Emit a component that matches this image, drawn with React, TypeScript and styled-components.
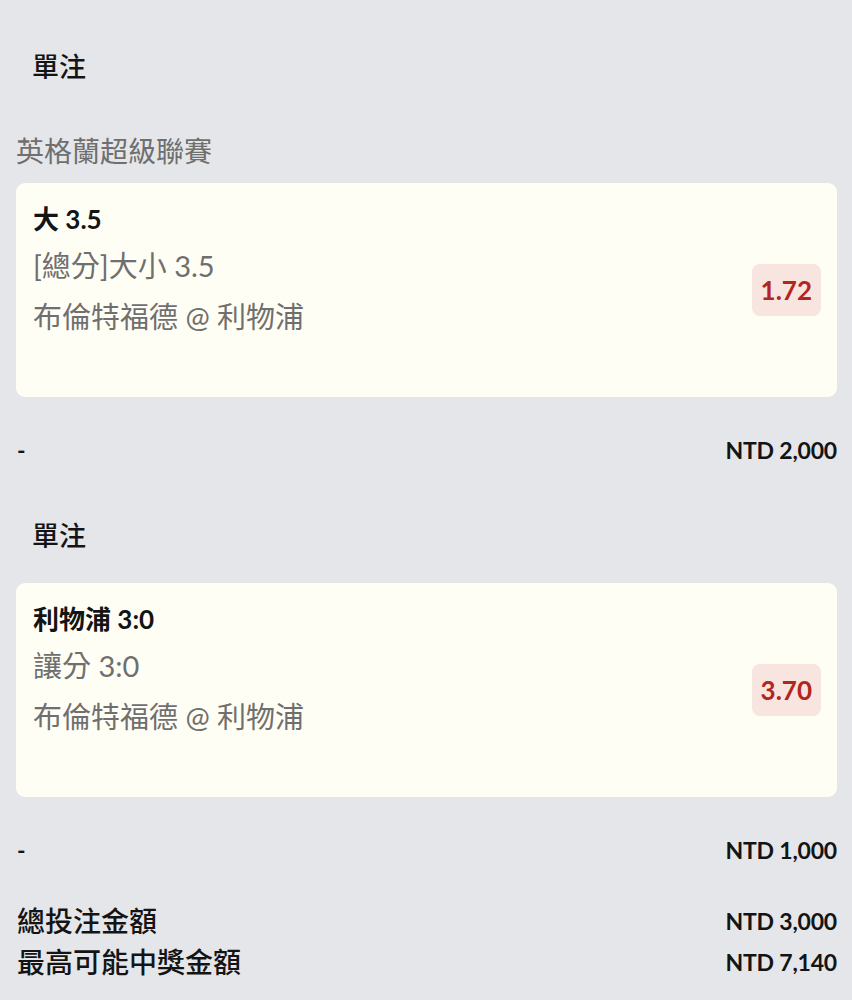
import styled, { createGlobalStyle } from 'styled-components';

const GlobalStyle = createGlobalStyle`
  html, body {
    margin: 0;
    padding: 0;
    background: #e5e6e9;
  }
  body {
    font-family: Lato, "Noto Sans CJK TC", "Noto Sans", sans-serif;
    color: #141414;
  }
`;

const Page = styled.div`
  padding: 47px 15px 30px 16px;
  display: flex;
  flex-direction: column;
`;

const SectionTitle = styled.div<{ $top?: number }>`
  margin-top: ${(p) => p.$top ?? 0}px;
  padding: 0 16px;
  font-size: 27px;
  font-weight: 500;
  line-height: 40px;
`;

const League = styled.div`
  margin-top: 44px;
  font-size: 28px;
  line-height: 40px;
  color: #6f6f6f;
`;

const Card = styled.div<{ $top: number }>`
  margin-top: ${(p) => p.$top}px;
  height: 214px;
  box-sizing: border-box;
  padding: 18px 16px 0 17px;
  background: #fffef5;
  border-radius: 9px;
  display: flex;
  justify-content: space-between;
  align-items: flex-start;
`;

const Info = styled.div`
  display: flex;
  flex-direction: column;
`;

const Pick = styled.div`
  font-size: 26px;
  font-weight: 700;
  line-height: 36px;
`;

const Detail = styled.div<{ $top: number }>`
  margin-top: ${(p) => p.$top}px;
  font-size: 29px;
  line-height: 40px;
  color: #6f6f6f;
`;

const Odds = styled.div`
  align-self: center;
  margin-top: -18px;
  height: 52px;
  padding: 0 9px;
  display: flex;
  align-items: center;
  border-radius: 8px;
  background: #f8e5df;
  color: #b3261f;
  font-size: 26px;
  font-weight: 700;
`;

const Row = styled.div<{ $top: number }>`
  margin-top: ${(p) => p.$top}px;
  display: flex;
  justify-content: space-between;
  align-items: center;
  line-height: 40px;
  padding-left: 1px;
`;

const Dash = styled.span`
  font-size: 23px;
  font-weight: 700;
`;

const Amount = styled.span`
  font-size: 23px;
  font-weight: 700;
  letter-spacing: -0.2px;
`;

const Totals = styled.div`
  margin-top: 31px;
  display: flex;
  flex-direction: column;
`;

const TotalRow = styled.div`
  display: flex;
  justify-content: space-between;
  align-items: center;
  line-height: 41px;
  padding-left: 1px;
`;

const TotalLabel = styled.span`
  font-size: 28px;
  font-weight: 500;
`;

type Bet = {
  pick: string;
  market: string;
  match: string;
  odds: string;
  stake: string;
};

const bets: Bet[] = [
  { pick: '大 3.5', market: '[總分]大小 3.5', match: '布倫特福德 @ 利物浦', odds: '1.72', stake: 'NTD 2,000' },
  { pick: '利物浦 3:0', market: '讓分 3:0', match: '布倫特福德 @ 利物浦', odds: '3.70', stake: 'NTD 1,000' },
];

const BetCard = ({ bet, top }: { bet: Bet; top: number }) => (
  <>
    <Card $top={top}>
      <Info>
        <Pick>{bet.pick}</Pick>
        <Detail $top={9}>{bet.market}</Detail>
        <Detail $top={11}>{bet.match}</Detail>
      </Info>
      <Odds>{bet.odds}</Odds>
    </Card>
    <Row $top={33}>
      <Dash>-</Dash>
      <Amount>{bet.stake}</Amount>
    </Row>
  </>
);

const App = () => (
  <>
    <GlobalStyle />
    <Page>
      <SectionTitle>單注</SectionTitle>
      <League>英格蘭超級聯賽</League>
      <BetCard bet={bets[0]} top={12} />
      <SectionTitle $top={46}>單注</SectionTitle>
      <BetCard bet={bets[1]} top={27} />
      <Totals>
        <TotalRow>
          <TotalLabel>總投注金額</TotalLabel>
          <Amount>NTD 3,000</Amount>
        </TotalRow>
        <TotalRow>
          <TotalLabel>最高可能中獎金額</TotalLabel>
          <Amount>NTD 7,140</Amount>
        </TotalRow>
      </Totals>
    </Page>
  </>
);

export default App;
